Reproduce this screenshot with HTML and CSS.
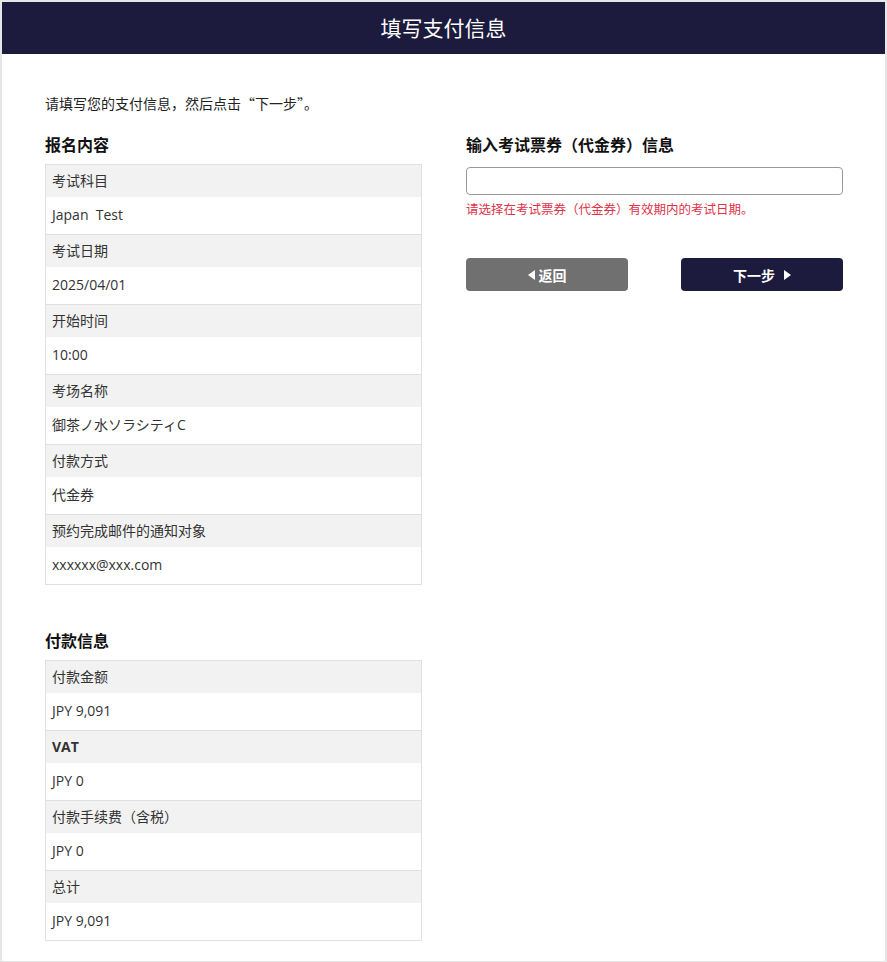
FILE: index.html
```html
<!DOCTYPE html>
<html lang="zh-CN">
<head>
    <meta charset="UTF-8">
    <meta name="viewport" content="width=device-width, initial-scale=1.0">
    <title>填写支付信息</title>
    <link rel="stylesheet" href="styles.css">
</head>
<body>

<div class="page">
    <!-- 🌟 Title bar -->
    <header class="title-bar">
        <h1>填写支付信息</h1>
    </header>

    <main class="content">
        <p class="intro">请填写您的支付信息，然后点击“下一步”。</p>

        <div class="columns">
            <!-- 🌟 Left: summary -->
            <div class="col">
                <h2>报名内容</h2>
                <dl class="info-table">
                    <div class="info-row"><dt>考试科目</dt><dd>Japan&nbsp; Test</dd></div>
                    <div class="info-row"><dt>考试日期</dt><dd>2025/04/01</dd></div>
                    <div class="info-row"><dt>开始时间</dt><dd>10:00</dd></div>
                    <div class="info-row"><dt>考场名称</dt><dd>御茶ノ水ソラシティC</dd></div>
                    <div class="info-row"><dt>付款方式</dt><dd>代金券</dd></div>
                    <div class="info-row"><dt>预约完成邮件的通知对象</dt><dd>xxxxxx@xxx.com</dd></div>
                </dl>

                <h2 class="section-gap">付款信息</h2>
                <dl class="info-table">
                    <div class="info-row"><dt>付款金额</dt><dd>JPY 9,091</dd></div>
                    <div class="info-row"><dt class="bold">VAT</dt><dd>JPY 0</dd></div>
                    <div class="info-row"><dt>付款手续费（含税）</dt><dd>JPY 0</dd></div>
                    <div class="info-row"><dt>总计</dt><dd>JPY 9,091</dd></div>
                </dl>
            </div>

            <!-- 🌟 Right: voucher -->
            <div class="col">
                <h2>输入考试票券（代金券）信息</h2>
                <input type="text" class="voucher-input">
                <p class="error">请选择在考试票券（代金券）有效期内的考试日期。</p>

                <div class="actions">
                    <button class="btn btn-back">
                        <svg width="7" height="10" viewBox="0 0 7 10"><path d="M7 0L0 5l7 5z" fill="#fff"/></svg>
                        返回
                    </button>
                    <button class="btn btn-next">
                        下一步
                        <svg width="7" height="10" viewBox="0 0 7 10"><path d="M0 0l7 5-7 5z" fill="#fff"/></svg>
                    </button>
                </div>
            </div>
        </div>
    </main>
</div>

</body>
</html>
```

FILE: styles.css
```css
/* 🌟 General Styles */
* {
    margin: 0;
    padding: 0;
    box-sizing: border-box;
}

body {
    background: #e6e6e6;
    color: #333;
    font-family: "Open Sans", "Noto Sans CJK SC", sans-serif;
    font-size: 14px;
    line-height: 20px;
    padding: 2px 2px 2px 2px;
}

.page {
    background: #fff;
    min-height: 958px;
}

/* 🌟 Title bar */
.title-bar {
    background: #1c1a3d;
    height: 52px;
    display: flex;
    align-items: center;
    justify-content: center;
}

.title-bar h1 {
    color: #fff;
    font-size: 21px;
    font-weight: normal;
}

/* 🌟 Content */
.content {
    padding: 39px 42px 20px 43px;
}

.intro {
    color: #222;
    font-family: "Noto Sans CJK SC", sans-serif;
    margin-bottom: 22px;
}

.columns {
    display: grid;
    grid-template-columns: 377px 377px;
    column-gap: 44px;
}

h2 {
    font-size: 16px;
    line-height: 20px;
    font-weight: bold;
    color: #111;
    margin-bottom: 9px;
}

.section-gap {
    margin-top: 46px;
}

/* 🌟 Info table */
.info-table {
    border: 1px solid #e0e0e0;
}

.info-row + .info-row {
    border-top: 1px solid #e0e0e0;
}

.info-row dt {
    background: #f2f2f2;
    padding: 6px 6px;
    color: #333;
}

.info-row dt.bold {
    font-weight: bold;
}

.info-row dd {
    padding: 8px 6px 9px;
    color: #333;
}

/* 🌟 Voucher form */
.voucher-input {
    display: block;
    width: 100%;
    height: 28px;
    margin-top: 12px;
    border: 1px solid #999;
    border-radius: 4px;
    background: #fff;
}

.error {
    color: #e0324a;
    font-size: 12.5px;
    margin-top: 5px;
}

.actions {
    display: flex;
    justify-content: space-between;
    margin-top: 38px;
}

.btn {
    width: 162px;
    height: 33px;
    border: none;
    border-radius: 4px;
    color: #fff;
    font-family: "Open Sans", "Noto Sans CJK SC", sans-serif;
    font-size: 14px;
    font-weight: bold;
    display: flex;
    align-items: center;
    justify-content: center;
    gap: 4px;
    cursor: pointer;
}

.btn-back {
    background: #707070;
}

.btn-next {
    background: #1c1a3d;
    gap: 9px;
}
```
